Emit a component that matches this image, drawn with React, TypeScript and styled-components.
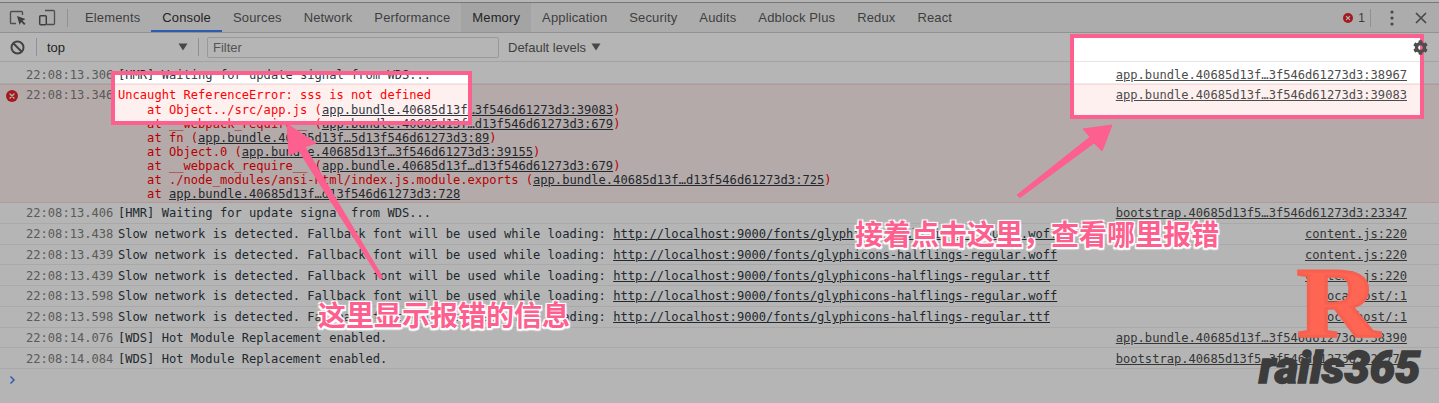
import React from "react";
import styled, { createGlobalStyle } from "styled-components";
import { FaCog } from "react-icons/fa";

const Global = createGlobalStyle`
  html, body { margin: 0; padding: 0; background: #fff; overflow: hidden; }
  #root { width: 1439px; height: 403px; }
`;

const Page = styled.div`
  position: relative;
  width: 1439px;
  height: 403px;
  padding-top: 2px;
  box-sizing: border-box;
  overflow: hidden;
  background: #fff;
  font-family: "Liberation Sans", Arial, sans-serif;
`;

const TabBar = styled.div`
  display: flex;
  align-items: stretch;
  height: 31px;
  box-sizing: border-box;
  background: #f3f3f3;
  border-top: 1px solid #a8a8a8;
  border-bottom: 1px solid #cdcdcd;
`;

const ToolIcons = styled.div`
  display: flex;
  align-items: center;
  width: 67px;
  padding-left: 9px;
  gap: 11px;
  box-sizing: border-box;
`;

const VDivider = styled.div<{ $h?: number }>`
  width: 1px;
  height: ${(p) => p.$h ?? 18}px;
  background: #ccc;
  align-self: center;
  flex: none;
`;

const Tabs = styled.div`
  display: flex;
  padding-left: 6px;
`;

const Tab = styled.div<{ $active?: boolean; $hover?: boolean }>`
  display: flex;
  align-items: center;
  padding: 0 11px;
  font-size: 13px;
  letter-spacing: 0.14px;
  color: ${(p) => (p.$active || p.$hover ? "#333" : "#5a5a5a")};
  background: ${(p) => (p.$hover ? "#e8e8e8" : "transparent")};
  box-shadow: ${(p) => (p.$active ? "inset 0 -2px 0 #3e82f7" : "none")};
`;

const Spacer = styled.div`
  flex: 1;
`;

const ErrorCount = styled.div`
  display: flex;
  align-items: center;
  gap: 5px;
  font-size: 12px;
  color: #555;
  padding-right: 5px;
`;

const WinIcons = styled.div`
  display: flex;
  align-items: center;
  width: 68px;
  flex: none;
`;

const KebabSlot = styled.div`
  width: 44px;
  padding-left: 19px;
  box-sizing: border-box;
  display: flex;
`;

const FilterBar = styled.div`
  display: flex;
  align-items: center;
  height: 29px;
  box-sizing: border-box;
  background: #fff;
  border-bottom: 1px solid #e6e6e6;
  font-size: 13px;
  color: #5a5a5a;
`;

const BlockSlot = styled.div`
  width: 36px;
  padding-left: 10px;
  box-sizing: border-box;
  display: flex;
  flex: none;
`;

const ContextSelect = styled.div`
  width: 161px;
  padding: 0 10px 0 10px;
  box-sizing: border-box;
  display: flex;
  align-items: center;
  justify-content: space-between;
  color: #333;
  flex: none;
`;

const FilterInput = styled.div`
  width: 292px;
  height: 21px;
  margin-left: 8px;
  padding-left: 5px;
  box-sizing: border-box;
  border: 1px solid #d8d8d8;
  border-radius: 2px;
  display: flex;
  align-items: center;
  color: #777;
  flex: none;
`;

const Levels = styled.div`
  margin-left: 9px;
  display: flex;
  align-items: center;
  gap: 5px;
`;

const GearSlot = styled.div`
  position: relative;
  z-index: 2;
  margin-left: auto;
  padding-right: 11px;
  display: flex;
  color: #4e4e4e;
`;

const Log = styled.div`
  font-family: "DejaVu Sans Mono", "Liberation Mono", monospace;
  font-size: 12.1px;
  line-height: 14px;
  color: #303942;
`;

const Row = styled.div<{ $first?: boolean }>`
  display: flex;
  height: ${(p) => (p.$first ? "22px" : "20.75px")};
  padding-top: ${(p) => (p.$first ? "6px" : "3.4px")};
  box-sizing: border-box;
  border-bottom: 1px solid #eee;
  white-space: pre;
`;

const ErrorRow = styled.div`
  display: flex;
  height: 119px;
  padding-top: 3px;
  box-sizing: border-box;
  background: #fff0f0;
  border-top: 1px solid #ffd6d6;
  border-bottom: 1px solid #ffd6d6;
  white-space: pre;
  color: #ff0000;
`;

const IconSlot = styled.div`
  width: 26px;
  padding-left: 6px;
  box-sizing: border-box;
  flex: none;
  display: flex;
  padding-top: 2px;
`;

const Time = styled.span`
  width: 92px;
  flex: none;
  color: #808080;
`;

const Message = styled.div`
  flex: 1;
  min-width: 0;
`;

const ErrorHead = styled.div`
  margin-bottom: 1px;
`;

const TextLink = styled.span`
  text-decoration: underline;
  color: #303942;
`;

const Source = styled.span`
  flex: none;
  padding-right: 32px;
  text-decoration: underline;
  color: #4c4c4c;
`;

const Prompt = styled.div`
  padding: 6px 0 0 9px;
  display: flex;
`;

const Overlay = styled.svg`
  position: absolute;
  left: 0;
  top: 0;
  width: 1439px;
  height: 403px;
`;

const Annotation = styled.div<{ $left: number; $top: number }>`
  position: absolute;
  left: ${(p) => p.$left}px;
  top: ${(p) => p.$top}px;
  font-family: "Noto Sans CJK SC", "Liberation Sans", sans-serif;
  font-size: 28px;
  line-height: 34px;
  font-weight: 700;
  white-space: nowrap;
  color: #fd5f8e;
  text-shadow: 1.5px 1.5px 1px #fff, -1.5px 1.5px 1px #fff, 1.5px -1.5px 1px #fff, -1.5px -1.5px 1px #fff, 0 2px 2px #fff;
`;

const LogoR = styled.div`
  position: absolute;
  left: 1297px;
  top: 246px;
  font-family: "Liberation Serif", serif;
  font-weight: 700;
  font-size: 100px;
  line-height: 114px;
  color: #ff6553;
  -webkit-text-stroke: 3px #f5604f;
  transform: scaleX(1.14);
  transform-origin: left top;
`;

const LogoText = styled.div`
  position: absolute;
  left: 1259px;
  top: 342px;
  font-family: "Roboto", "Liberation Sans", sans-serif;
  font-weight: 900;
  font-style: italic;
  font-size: 45px;
  line-height: 52px;
  color: #3c3c3c;
  -webkit-text-stroke: 1.5px #3c3c3c;
  white-space: nowrap;
`;

const ErrorDot = ({ r = 6 }: { r?: number }) => (
  <svg width={r * 2} height={r * 2} viewBox="0 0 12 12">
    <circle cx="6" cy="6" r="6" fill="#e8242a" />
    <path d="M4 4l4 4M8 4l-4 4" stroke="#fff" strokeWidth="1.3" strokeLinecap="round" />
  </svg>
);

const InspectIcon = () => (
  <svg width="18" height="18" viewBox="0 0 18 18" fill="none">
    <path d="M7 14.5H2.5a1 1 0 0 1-1-1v-10a1 1 0 0 1 1-1h10a1 1 0 0 1 1 1V6" stroke="#6e6e6e" strokeWidth="1.4" />
    <path d="M8 7l2.6 9 1.6-3 3 3 1.3-1.3-3-3 3-1.6z" fill="#5a5a5a" />
  </svg>
);

const DeviceIcon = () => (
  <svg width="18" height="18" viewBox="0 0 18 18" fill="none">
    <path d="M7 1.5h8.5a1 1 0 0 1 1 1v12a1 1 0 0 1-1 1H9" stroke="#6e6e6e" strokeWidth="1.3" />
    <rect x="1.7" y="6.7" width="6.6" height="9" rx="1" stroke="#5a5a5a" strokeWidth="1.5" />
  </svg>
);

const BlockIcon = () => (
  <svg width="15" height="15" viewBox="0 0 15 15" fill="none">
    <circle cx="7.5" cy="7.5" r="6" stroke="#5e5e5e" strokeWidth="2" />
    <path d="M3.3 3.3l8.4 8.4" stroke="#5e5e5e" strokeWidth="2" />
  </svg>
);

const Caret = () => (
  <svg width="10" height="8" viewBox="0 0 10 8">
    <path d="M0.5 0.5h9L5 7.5z" fill="#666" />
  </svg>
);

const Kebab = () => (
  <svg width="4" height="16" viewBox="0 0 4 16">
    <circle cx="2" cy="2" r="1.6" fill="#666" />
    <circle cx="2" cy="8" r="1.6" fill="#666" />
    <circle cx="2" cy="14" r="1.6" fill="#666" />
  </svg>
);

const CloseIcon = () => (
  <svg width="12" height="12" viewBox="0 0 12 12">
    <path d="M1 1l10 10M11 1L1 11" stroke="#666" strokeWidth="1.7" />
  </svg>
);

const Chevron = () => (
  <svg width="8" height="10" viewBox="0 0 8 10" fill="none">
    <path d="M1.5 1.5L5 5 1.5 8.5" stroke="#3f86f2" strokeWidth="1.5" />
  </svg>
);

const TAB_NAMES = ["Elements", "Console", "Sources", "Network", "Performance", "Memory", "Application", "Security", "Audits", "Adblock Plus", "Redux", "React"];

const SLOW = "Slow network is detected. Fallback font will be used while loading: ";
const FONT = "http://localhost:9000/fonts/glyphicons-halflings-regular.";
const BOOT = "bootstrap.40685d13f5…3f546d61273d3";
const APP = "app.bundle.40685d13f…3f546d61273d3";

const ROWS = [
  { time: "22:08:13.406", text: "[HMR] Waiting for update signal from WDS...", src: `${BOOT}:23347` },
  { time: "22:08:13.438", text: SLOW, link: `${FONT}woff`, src: "content.js:220" },
  { time: "22:08:13.439", text: SLOW, link: `${FONT}woff`, src: "content.js:220" },
  { time: "22:08:13.439", text: SLOW, link: `${FONT}ttf`, src: "content.js:220" },
  { time: "22:08:13.598", text: SLOW, link: `${FONT}woff`, src: "localhost/:1" },
  { time: "22:08:13.598", text: SLOW, link: `${FONT}ttf`, src: "localhost/:1" },
  { time: "22:08:14.076", text: "[WDS] Hot Module Replacement enabled.", src: `${APP}:38390` },
  { time: "22:08:14.084", text: "[WDS] Hot Module Replacement enabled.", src: `${BOOT}:22777` },
];

const STACK: [string, string, string][] = [
  ["    at Object../src/app.js (", "app.bundle.40685d13f…3f546d61273d3:39083", ")"],
  ["    at __webpack_require__ (", "app.bundle.40685d13f…d13f546d61273d3:679", ")"],
  ["    at fn (", "app.bundle.40685d13f…5d13f546d61273d3:89", ")"],
  ["    at Object.0 (", "app.bundle.40685d13f…3f546d61273d3:39155", ")"],
  ["    at __webpack_require__ (", "app.bundle.40685d13f…d13f546d61273d3:679", ")"],
  ["    at ./node_modules/ansi-html/index.js.module.exports (", "app.bundle.40685d13f…d13f546d61273d3:725", ")"],
  ["    at ", "app.bundle.40685d13f…d13f546d61273d3:728", ""],
];

export default function App() {
  return (
    <Page>
      <Global />
      <TabBar>
        <ToolIcons>
          <InspectIcon />
          <DeviceIcon />
        </ToolIcons>
        <VDivider />
        <Tabs>
          {TAB_NAMES.map((name) => (
            <Tab key={name} $active={name === "Console"} $hover={name === "Memory"}>
              {name}
            </Tab>
          ))}
        </Tabs>
        <Spacer />
        <ErrorCount>
          <ErrorDot r={5} />1
        </ErrorCount>
        <VDivider />
        <WinIcons>
          <KebabSlot>
            <Kebab />
          </KebabSlot>
          <CloseIcon />
        </WinIcons>
      </TabBar>
      <FilterBar>
        <BlockSlot>
          <BlockIcon />
        </BlockSlot>
        <VDivider />
        <ContextSelect>
          top
          <Caret />
        </ContextSelect>
        <VDivider />
        <FilterInput>Filter</FilterInput>
        <Levels>
          Default levels
          <Caret />
        </Levels>
        <GearSlot>
          <FaCog size={15} />
        </GearSlot>
      </FilterBar>
      <Log>
        <Row $first>
          <IconSlot />
          <Time>22:08:13.306</Time>
          <Message>[HMR] Waiting for update signal from WDS...</Message>
          <Source>{APP}:38967</Source>
        </Row>
        <ErrorRow>
          <IconSlot>
            <ErrorDot />
          </IconSlot>
          <Time>22:08:13.346</Time>
          <Message>
            <ErrorHead>Uncaught ReferenceError: sss is not defined</ErrorHead>
            {STACK.map(([a, b, c], i) => (
              <div key={i}>
                {a}
                <TextLink>{b}</TextLink>
                {c}
              </div>
            ))}
          </Message>
          <Source>{APP}:39083</Source>
        </ErrorRow>
        {ROWS.map((r, i) => (
          <Row key={i}>
            <IconSlot />
            <Time>{r.time}</Time>
            <Message>
              {r.text}
              {r.link && <TextLink>{r.link}</TextLink>}
            </Message>
            <Source>{r.src}</Source>
          </Row>
        ))}
        <Prompt>
          <Chevron />
        </Prompt>
      </Log>
      <Overlay viewBox="0 0 1439 403">
        <path
          fillRule="evenodd"
          fill="rgba(0,0,0,0.29)"
          d="M0 0H1439V403H0Z M115 75V121H468V75Z M1074 38V115H1420V38Z"
        />
        <path
          fill="#fd5f8e"
          stroke="#fd5f8e"
          strokeWidth="1"
          strokeLinejoin="round"
          d="M380 279L299 151L289 155L287 124L316 143L305 147L382.5 277Z"
        />
        <path
          fill="#fd5f8e"
          stroke="#fd5f8e"
          strokeWidth="1"
          strokeLinejoin="round"
          d="M1017 195L1090 137L1083 129L1112 125L1102 151L1094 143L1020 197.5Z"
        />
        <rect x="113" y="73" width="357" height="50" fill="none" stroke="#fd5f8e" strokeWidth="4" />
        <rect x="1072" y="36" width="350" height="81" fill="none" stroke="#fd5f8e" strokeWidth="4" />
      </Overlay>
      <Annotation $left={855} $top={216}>接着点击这里，查看哪里报错</Annotation>
      <Annotation $left={318} $top={297}>这里显示报错的信息</Annotation>
      <LogoText>rails365</LogoText>
      <LogoR>R</LogoR>
    </Page>
  );
}
